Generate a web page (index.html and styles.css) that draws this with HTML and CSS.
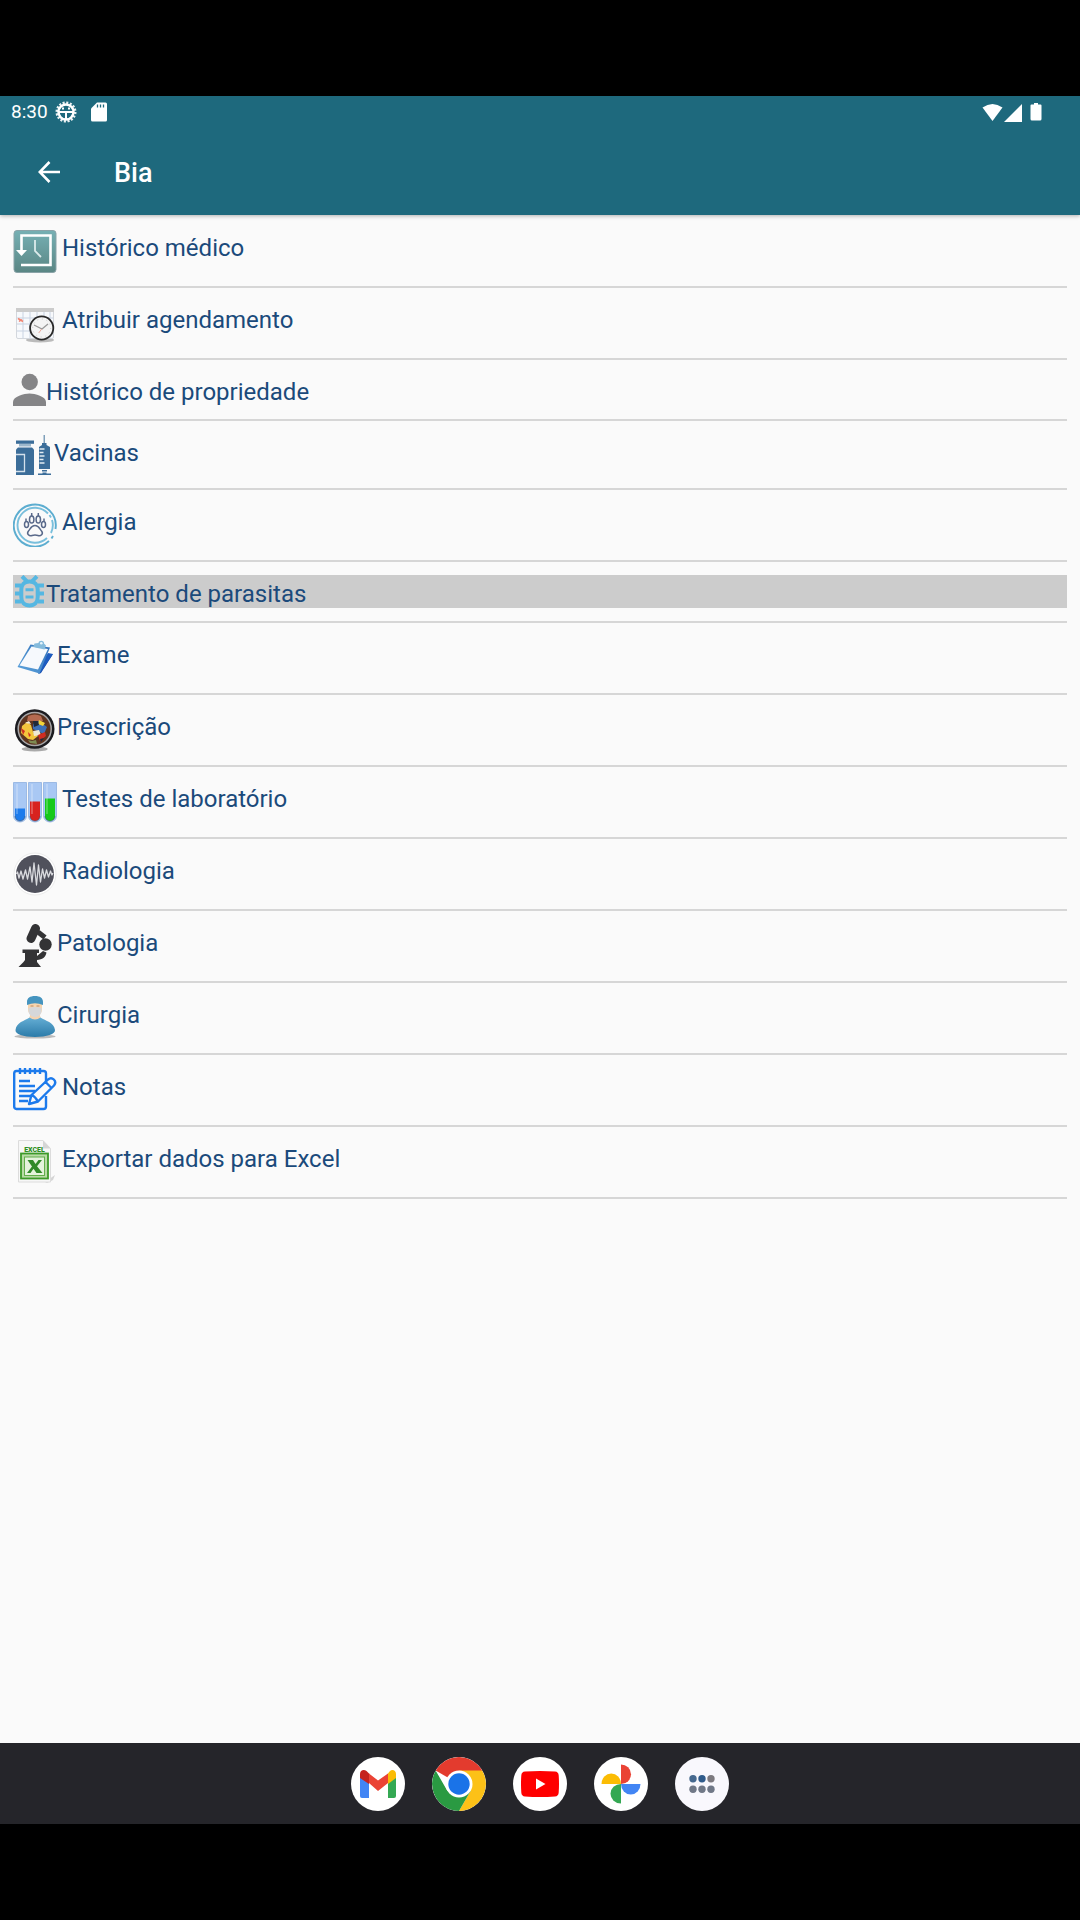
FILE: index.html
```html
<!DOCTYPE html>
<html lang="pt">
<head>
  <meta charset="UTF-8">
  <meta name="viewport" content="width=device-width, initial-scale=1.0">
  <title>Bia</title>
  <link rel="stylesheet" href="styles.css">
</head>
<body>
  <header class="header">
    <div class="status">
      <span class="time">8:30</span>
      <svg class="status-gear" width="22" height="22" viewBox="0 0 22 22" fill="none" stroke="#fff">
        <circle cx="11" cy="11" r="9" stroke-width="3" stroke-dasharray="2 1.53" opacity=".9"/>
        <circle cx="11" cy="11" r="7.500" stroke-width="2.400"/>
        <path d="M4 11h14M11 11v8M7 7.500h2M13 7.500h2" stroke-width="2"/>
      </svg>
      <svg class="status-sd" width="16" height="20" viewBox="0 0 16 20">
        <path d="M6 .5h8.500a1.500 1.500 0 0 1 1.500 1.500v16a1.500 1.500 0 0 1-1.500 1.500h-13A1.500 1.500 0 0 1 0 18V6.500z" fill="#fff"/>
        <path d="M6.500 2.500v3M9.500 2.500v3M12.500 2.500v3" stroke="#1e697d" stroke-width="1.300"/>
      </svg>
      <svg class="status-right" width="60" height="20" viewBox="0 0 60 20" fill="#fff">
        <path d="M.5 5.500Q10.500-1.500 20.500 5.500L10.500 19z"/>
        <path d="M40 2v18H22z"/>
        <path d="M52 1h4v1.500h2.500a1 1 0 0 1 1 1V17a1.500 1.500 0 0 1-1.500 1.500h-8a1.500 1.500 0 0 1-1.500-1.500V3.500a1 1 0 0 1 1-1H52z"/>
      </svg>
    </div>
    <div class="toolbar">
      <button class="back" type="button" aria-label="Voltar">
        <svg width="22" height="22" viewBox="0 0 22 22" fill="none" stroke="#fff" stroke-width="2.600">
          <path d="M11.500 1L1.700 11l9.800 10M1.700 11H22"/>
        </svg>
      </button>
      <h1 class="title">Bia</h1>
    </div>
  </header>

  <main class="content">
    <ul class="menu">
      <li>
        <a class="item spaced" href="#historico">
          <svg width="44" height="44" viewBox="0 0 44 44" fill="none">
            <defs><linearGradient id="teal" x1="0" y1="0" x2="0" y2="1"><stop offset="0" stop-color="#76b0b4"/><stop offset="1" stop-color="#5a8684"/></linearGradient></defs>
            <rect x="1" y="1.500" width="42" height="42" rx="3" fill="url(#teal)" stroke="#8aa3a8"/>
            <path d="M8.500 22V6.500h29V36H8" stroke="#fff" stroke-width="2.600"/>
            <path d="M3 21h11l-5.500 6z" fill="#fff"/>
            <path d="M22 11v11l6 6" stroke="#dcebeb" stroke-width="1.800"/>
          </svg>
          <span>Histórico médico</span>
        </a>
      </li>
      <li>
        <a class="item spaced" href="#agendamento">
          <svg width="44" height="44" viewBox="0 0 44 44" fill="none">
            <ellipse cx="27" cy="39" rx="14" ry="2.500" fill="#bbb"/>
            <rect x="3.500" y="7.500" width="37" height="30" rx="1.500" fill="#f7f9fc" stroke="#d3d7dd"/>
            <path d="M3 7h38v4H3z" fill="#ccc"/>
            <path d="M10 11v26M17 11v26M24 11v26M31 11v26M37 11v26M4 17h36M4 23h36M4 30h36" stroke="#c9d3e2"/>
            <path d="M5 17.500l5 3M6 20.500l3-2" stroke="#f2836f" stroke-width="1.500"/>
            <circle cx="28.700" cy="27" r="11.600" fill="#f4f4f4" stroke="#292929" stroke-width="1.800"/>
            <circle cx="28.700" cy="27" r="9" stroke="#c8c8c8" stroke-dasharray="1 3.700"/>
            <path d="M21 24l8 4 6-5" stroke="#999" stroke-width="1.300"/>
            <path d="M28.700 28l-3 4" stroke="#e9a79a"/>
          </svg>
          <span>Atribuir agendamento</span>
        </a>
      </li>
      <li>
        <a class="item" href="#propriedade">
          <svg width="33" height="33" viewBox="0 0 33 33" fill="#858587">
            <circle cx="16.700" cy="9" r="8.200"/>
            <path d="M0 33v-4c0-5.500 11-8.500 16.500-8.500S33 23.500 33 29v4z"/>
          </svg>
          <span>Histórico de propriedade</span>
        </a>
      </li>
      <li>
        <a class="item" href="#vacinas">
          <svg width="41" height="41" viewBox="0 0 41 41" fill="#3b6d99">
            <path d="M3 6.500h18v3.300H3z"/>
            <path d="M6 10h12v2.500H6z" fill="#9cb7cc"/>
            <path d="M5 13.500h14l2 2V41H3V15.500z"/>
            <path d="M3 20.500h8.500v17H3" fill="none" stroke="#d3e0eb" stroke-width="1.300"/>
            <path d="M30.500 1h1.500v8h-1.500z" fill="#7f9fba"/>
            <path d="M29 9h4.500v2l3.500 2v22H26V13l3-2z"/>
            <path d="M26.500 15h5M26.500 18.500h4M26.500 22h5M26.500 25.500h4M26.500 29h5" stroke="#e2ebf2" stroke-width="1.300"/>
            <path d="M29 36h5v1.500h-5zM29.500 38.500h4v1H38V41H25v-1.500h4.500z"/>
          </svg>
          <span>Vacinas</span>
        </a>
      </li>
      <li>
        <a class="item spaced" href="#alergia">
          <svg width="44" height="44" viewBox="0 0 44 44" fill="none">
            <path d="M36 38A21 21 0 1 1 42.500 26M40 33l-1.500 2.500M12 41a21 21 0 0 0 21-.5" stroke="#5cadd0" stroke-width="1.900"/>
            <path d="M35 10.500A17.500 17.500 0 1 0 34 35M36.500 12l1.500 2.500M39 17a17.500 17.500 0 0 1-1 13" stroke="#79bfdc" stroke-width="1.900"/>
            <g stroke="#59698a" stroke-width="1.500">
              <path d="M22 22.500c4 0 4.500 3.500 6.500 5.500 2.500 3-1 5.500-3.500 4.500-2-.8-4-.8-6 0-2.500 1-6-1.500-3.500-4.500 2-2 2.500-5.500 6.500-5.500z"/>
              <ellipse cx="13.500" cy="21.500" rx="2" ry="3"/><ellipse cx="18.700" cy="16.500" rx="2.200" ry="3.600"/>
              <ellipse cx="25.300" cy="16.500" rx="2.200" ry="3.600"/><ellipse cx="30.500" cy="21.500" rx="2" ry="3"/>
              <path d="M13 18.500v-3M18.700 13v-3M25.300 13v-3M31 18.500v-3"/>
            </g>
          </svg>
          <span>Alergia</span>
        </a>
      </li>
      <li>
        <a class="item selected" href="#parasitas">
          <svg width="33" height="33" viewBox="0 0 33 33" fill="none" stroke="#55b7e2" stroke-width="4">
            <path d="M16.500 6.500c5.500 0 8.200 3.500 8.200 8v7.500c0 5-3 8.500-8.200 8.500S8.300 27 8.300 22v-7.500c0-4.500 2.700-8 8.200-8z"/>
            <path d="M9 1.300l5 5M24 1.300l-5 5M2 10.500h6M2 18.500h6M2 26.500h6M25 10.500h6M25 18.500h6M25 26.500h6"/>
            <path d="M12.500 14.700h8M12.500 22h8" stroke-width="3"/>
          </svg>
          <span>Tratamento de parasitas</span>
        </a>
      </li>
      <li>
        <a class="item" href="#exame">
          <svg width="44" height="44" viewBox="0 0 44 44">
            <defs><linearGradient id="board" x1="0" y1="1" x2="1" y2="0"><stop offset="0" stop-color="#5da4dd"/><stop offset="1" stop-color="#2f6fb8"/></linearGradient></defs>
            <path d="M37 19l3-1-12 19-3 1z" fill="#1549a8"/>
            <path d="M35 17l5 1-13 19.500-4-3z" fill="#1d5cc0"/>
            <path d="M17.500 8.500L37 11.500 26.500 37.500 4.500 31z" fill="url(#board)"/>
            <path d="M18.500 10.500l16.500 2.500-10 20.500L6.500 29.500z" fill="#f6f9fd"/>
            <path d="M20 11l1.500-3.500 4-.5c0-3 6-3 5.500.5l2 2-1.500 4z" fill="#85bbdc"/>
            <circle cx="28.300" cy="7.200" r="1.300" fill="#e8f5fb"/>
          </svg>
          <span>Exame</span>
        </a>
      </li>
      <li>
        <a class="item" href="#prescricao">
          <svg width="44" height="44" viewBox="0 0 44 44">
            <ellipse cx="21.700" cy="41" rx="13" ry="2.500" fill="#aaa"/>
            <circle cx="21.700" cy="21" r="19.800" fill="#1c1c20"/>
            <circle cx="21.700" cy="21" r="16.500" fill="#5d3420" stroke="#a6a6a8" stroke-width="1.500"/>
            <path d="M15 8q7-3 13 0l2 5H14z" fill="#b46a50"/>
            <path d="M9 18l5-4 4 3 2 7 5 4-5 4-5-1-7-6z" fill="#f3c53d"/>
            <path d="M20 16l6-3 8 6-3 7-7-3-4-2z" fill="#3e70b8"/>
            <path d="M26 12l6 3-2 3-5-2z" fill="#f4d43b"/>
            <path d="M20 23l6-1 2 5-7 1zM12 15l4-2 2 3z" fill="#f0e9d5"/>
            <path d="M25 27l7-3 1 4-6 5zM8 20l4 3-2 4zM15 24l3 3-2 2z" fill="#cf2d22"/>
            <path d="M20 13h5l1 4-5 2zM27 31l4-1-3 4z" fill="#20293a"/>
            <path d="M15 32l4 1 4-1 1 4-7-1z" fill="#7e8b52"/>
          </svg>
          <span>Prescrição</span>
        </a>
      </li>
      <li>
        <a class="item spaced" href="#testes">
          <svg width="44" height="44" viewBox="0 0 44 44">
            <g fill="#a9c8f4" stroke="#8eb0de" stroke-width=".8">
              <path d="M.5 2.500h13V36a6.500 6 0 0 1-13 0z"/><path d="M15.500 2.500h13V36a6.500 6 0 0 1-13 0z"/><path d="M30.500 2.500h13V36a6.500 6 0 0 1-13 0z"/>
            </g>
            <path d="M2 28.500h10V36a5 5 0 0 1-10 0z" fill="#1c7bec"/>
            <path d="M17 21.500h10V36a5 5 0 0 1-10 0z" fill="#d8231f"/>
            <path d="M32 18.500h10V36a5 5 0 0 1-10 0z" fill="#15c91a"/>
            <path d="M4 4v30M19 4v30M34 4v30" stroke="#fff" stroke-width="1.500" opacity=".3"/>
            <path d="M2 36a5 5 0 0 0 10 0M17 36a5 5 0 0 0 10 0M32 36a5 5 0 0 0 10 0" fill="none" stroke="#345" opacity=".5"/>
          </svg>
          <span>Testes de laboratório</span>
        </a>
      </li>
      <li>
        <a class="item spaced" href="#radiologia">
          <svg width="44" height="44" viewBox="0 0 44 44">
            <circle cx="22" cy="22" r="21" fill="#fff" stroke="#ececec"/>
            <circle cx="22" cy="22" r="19" fill="#50515c"/>
            <path d="M3.500 22l1-2 1.500 6 2-7 2 8 2.500-9 2 9 2.500-12 2 15 2-19 2.500 22 2-20 2 17 2-13 2 9 2-8 2 7 2-6 1.500 4 1-2" fill="none" stroke="#d9dade" stroke-width="1.300" stroke-linejoin="round"/>
          </svg>
          <span>Radiologia</span>
        </a>
      </li>
      <li>
        <a class="item" href="#patologia">
          <svg width="44" height="44" viewBox="0 0 44 44" fill="#333335">
            <path d="M22.500 4.500L18 14.500" stroke="#333335" stroke-width="9" stroke-linecap="round"/>
            <path d="M25 8l7 5.500" stroke="#333335" stroke-width="5"/>
            <circle cx="32.500" cy="20.500" r="6.200"/>
            <path d="M9.500 25.500H26v3.500h-2v3l6-5 3.500 1.500c-1 5-4 7-9.500 7.500v2l4 5H5.500l5-5 1.500-2v-7H9.500z"/>
          </svg>
          <span>Patologia</span>
        </a>
      </li>
      <li>
        <a class="item" href="#cirurgia">
          <svg width="44" height="44" viewBox="0 0 44 44">
            <defs><linearGradient id="scrubs" x1="0" y1="0" x2="0" y2="1"><stop offset="0" stop-color="#64add4"/><stop offset="1" stop-color="#2b7ba9"/></linearGradient></defs>
            <ellipse cx="22" cy="40.500" rx="20.500" ry="2" fill="#bbb"/>
            <path d="M17 15h10v5c2 3 0 6-5 6s-7-3-5-6z" fill="#f3d3b2"/>
            <path d="M2.500 34c1-8 9-9 14-12.500q5.500 4 11 0c5 3.500 13.500 4.500 14.500 12.500.5 4-8 7-20 7s-20-3-19.500-7z" fill="url(#scrubs)"/>
            <path d="M15 6h14v7c0 4-3 8-7 8s-7-4-7-8z" fill="#f7d5ae"/>
            <path d="M15.500 12q6.500-2 13 0v3c0 3-3 6-6.500 6s-6.500-3-6.500-6z" fill="#d6d7d9"/>
            <path d="M17.500 10h3M23.500 10h3" stroke="#b88964"/>
            <path d="M14 6c0-4 3-6 8-6s8 2 8 6v3q-8-3.500-16 0z" fill="#4594bf"/>
          </svg>
          <span>Cirurgia</span>
        </a>
      </li>
      <li>
        <a class="item spaced" href="#notas">
          <svg width="44" height="44" viewBox="0 0 44 44" fill="none" stroke="#1c7aec" stroke-width="2.400">
            <path d="M33 16V5.500a2.500 2.500 0 0 0-2.500-2.500h-27A2.500 2.500 0 0 0 1.200 5.500v33A2.500 2.500 0 0 0 3.500 41h27a2.500 2.500 0 0 0 2.500-2.500V28"/>
            <path d="M7 0v6M12 0v6M17 0v6M22 0v6M27 0v6"/>
            <path d="M6 13h11M6 18h16M6 23h16M6 28h12M6 33h9"/>
            <path d="M16 36l2.500-9L35 11.500c4-3.500 9.500 1.500 6 6L25 33.500zM32.500 14l6 6M18.500 27c2.500 1 5 3.500 6.500 6.500" stroke-linejoin="round"/>
          </svg>
          <span>Notas</span>
        </a>
      </li>
      <li>
        <a class="item spaced" href="#exportar">
          <svg width="44" height="44" viewBox="0 0 44 44">
            <path d="M32 42l10-7-2 5-6 3z" fill="#d5d5d5"/>
            <path d="M5.500 .5H30l7.500 8V42h-32z" fill="#f7f7f7" stroke="#dcdcdc"/>
            <path d="M30 .5V8.500h7.500z" fill="#d5d5d5"/>
            <text x="21.500" y="11.500" text-anchor="middle" class="excel-label">EXCEL</text>
            <rect x="8" y="13.500" width="27" height="25" fill="#b9dba6" stroke="#3d9a29" stroke-width="1.800"/>
            <rect x="11.500" y="17" width="20" height="18.500" fill="#e5f3dc" stroke="#63ae4b"/>
            <path d="M14.500 20h5.500l2.500 4 3-4h3.500l-5 6.300 5.500 6.700h-6l-3-4.300-3 4.300H14l5-6.500z" fill="#318a28"/>
          </svg>
          <span>Exportar dados para Excel</span>
        </a>
      </li>
    </ul>
  </main>

  <nav class="dock" aria-label="Apps">
    <button class="app" type="button" aria-label="Gmail">
      <svg viewBox="0 0 54 54">
        <path d="M9 19.500l9 6.500v15h-7a2 2 0 0 1-2-2z" fill="#4285f4"/>
        <path d="M45 19.500L37 26v15h6a2 2 0 0 0 2-2z" fill="#34a853"/>
        <path d="M18 26V16.500l9 7 10-7V26l-10 8z" fill="#ea4335"/>
        <path d="M9 21v-4c0-4 4-5 6.500-3l2.500 2.500V27z" fill="#c5221f"/>
        <path d="M45 21v-4c0-4-4-5-6-3l-2 2.500V27z" fill="#fbbc04"/>
      </svg>
    </button>
    <button class="app" type="button" aria-label="Chrome">
      <svg viewBox="0 0 54 54">
        <path d="M27 27L3.600 13.500A27 27 0 0 1 50.400 13.500z" fill="#e33b2e"/>
        <path d="M27 13.500h23.400A27 27 0 0 1 27 54l11.700-20.200z" fill="#fcc117"/>
        <path d="M15.300 33.700L3.600 13.500A27 27 0 0 0 27 54l11.700-20.200L27 38z" fill="#2a9a42"/>
        <circle cx="27" cy="27" r="13.500" fill="#fff"/>
        <circle cx="27" cy="27" r="10.700" fill="#1a73e8"/>
      </svg>
    </button>
    <button class="app" type="button" aria-label="YouTube">
      <svg viewBox="0 0 54 54">
        <path d="M12 14.500q15-1 30 0 3.500.3 3.700 4 .6 8.500 0 17-.2 3.700-3.700 4-15 1-30 0-3.500-.3-3.700-4-.6-8.500 0-17 .2-3.700 3.700-4z" fill="#f00"/>
        <path d="M23 21.500v11l9.500-5.500z" fill="#fff"/>
      </svg>
    </button>
    <button class="app" type="button" aria-label="Fotos">
      <svg viewBox="0 0 54 54">
        <path d="M27 27V7.500a10 9.750 0 0 1 0 19.500z" fill="#ea4335"/>
        <path d="M27 27h19.500a9.750 10.500 0 0 1-19.500 0z" fill="#4285f4"/>
        <path d="M27 27v19.500a10.500 9.750 0 0 1 0-19.500z" fill="#34a853"/>
        <path d="M27 27H7.500a9.750 10.500 0 0 1 19.500 0z" fill="#fbbc04"/>
      </svg>
    </button>
    <button class="app" type="button" aria-label="Todos os apps">
      <svg viewBox="0 0 54 54" fill="#707887">
        <circle cx="18" cy="21.700" r="3.700" fill="#46698f"/><circle cx="27" cy="21.700" r="3.700" fill="#305b8b"/><circle cx="36" cy="21.700" r="3.700" fill="#7d7a80"/>
        <circle cx="18" cy="32.300" r="3.700"/><circle cx="27" cy="32.300" r="3.700"/><circle cx="36" cy="32.300" r="3.700"/>
      </svg>
    </button>
  </nav>
</body>
</html>
```
FILE: styles.css
```css
* {
  box-sizing: border-box;
}
body {
  display: flex;
  flex-direction: column;
  min-height: 100vh;
  margin: 0;
  padding: 96px 0;
  background: #000;
  font-family: Roboto, "Noto Sans", sans-serif;
}
svg {
  display: block;
  flex-shrink: 0;
}
button {
  padding: 0;
  border: 0;
  background: none;
  cursor: pointer;
}

/* header */
.header {
  position: relative;
  background: #1e697d;
  color: #fff;
  box-shadow: 0 1px 4px rgba(0, 0, 0, .3);
}
.status {
  display: flex;
  align-items: center;
  height: 32px;
  padding: 0 38px 0 11px;
}
.time {
  font-size: 19px;
  line-height: 32px;
}
.status-gear {
  margin-left: 7px;
}
.status-sd {
  margin-left: 14px;
}
.status-right {
  margin-left: auto;
}
.toolbar {
  display: flex;
  align-items: center;
  height: 87px;
  padding: 0 38px;
}
.title {
  margin: 0 0 0 54px;
  padding-top: 2px;
  font-size: 27px;
  font-weight: 500;
  line-height: 32px;
}

/* menu */
.content {
  flex: 1;
  padding: 1px 13px;
  background: #fafafa;
}
.menu {
  margin: 0;
  padding: 0;
  list-style: none;
}
.menu li {
  padding: 13px 0;
  border-bottom: 2px solid #d6d6d6;
}
.item {
  display: flex;
  align-items: flex-start;
  color: #1b4a7b;
  font-size: 24px;
  line-height: 27px;
  text-decoration: none;
}
.item span {
  padding-top: 6px;
}
.spaced {
  gap: 5px;
}
.selected {
  background: #ccc;
}
.excel-label {
  fill: #2f8f22;
  font-size: 7px;
  font-weight: 900;
}

/* dock */
.dock {
  display: flex;
  align-items: center;
  justify-content: center;
  gap: 27px;
  height: 81px;
  background: #25252a;
}
.app {
  width: 54px;
  height: 54px;
  border-radius: 50%;
  background: #fff;
  overflow: hidden;
}
.app:last-child {
  background: #f9f8fd;
}
```
